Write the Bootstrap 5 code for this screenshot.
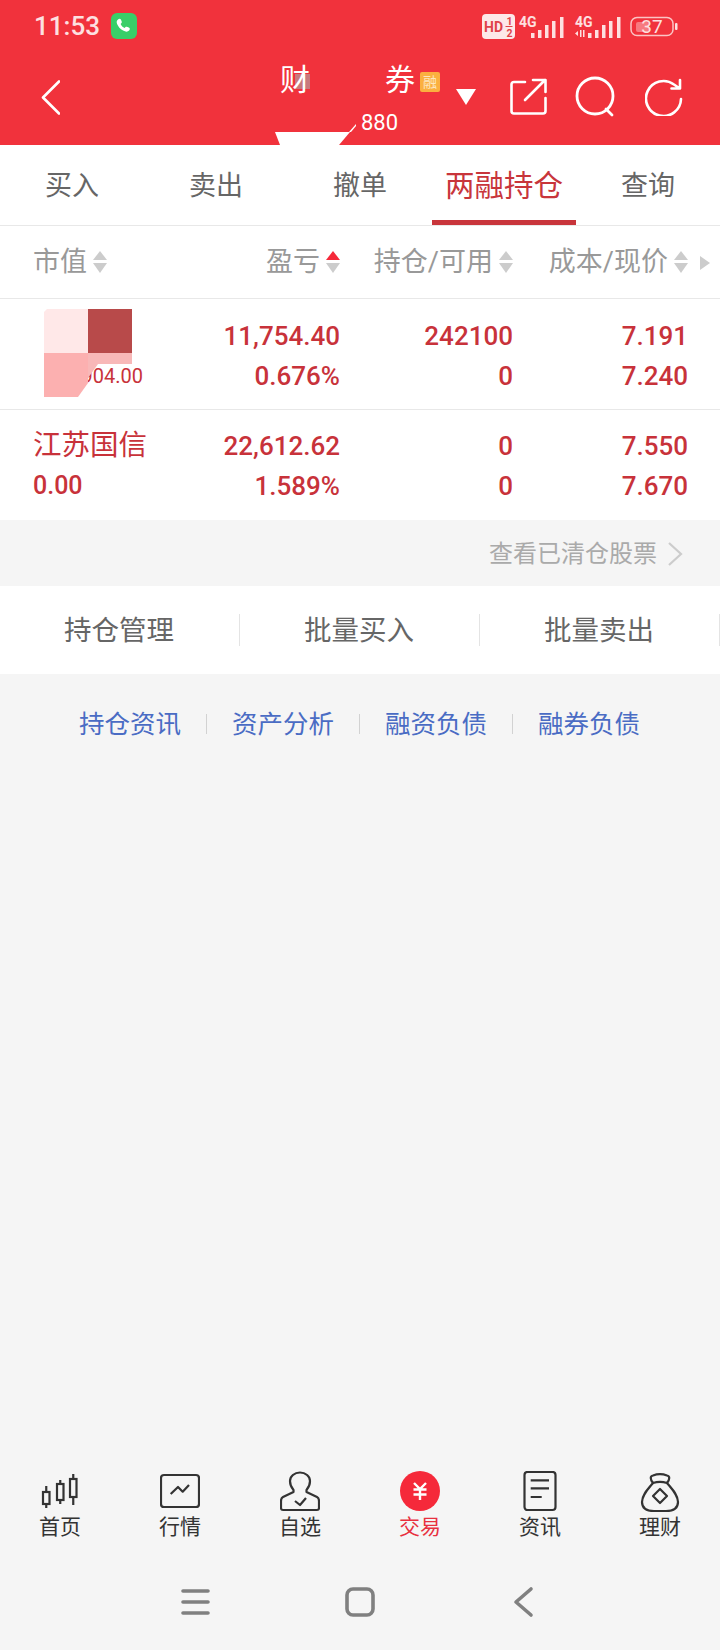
<!DOCTYPE html>
<html lang="zh">
<head>
<meta charset="UTF-8">
<meta name="viewport" content="width=device-width, initial-scale=1.0">
<title>两融持仓</title>
<link rel="stylesheet" href="https://cdn.jsdelivr.net/npm/bootstrap@5.3.0/dist/css/bootstrap.min.css">
<style>
    body {
        width: 720px;
        height: 1650px;
        background: #f5f5f5;
        font-family: Roboto, "Noto Sans CJK SC", sans-serif;
        overflow: hidden;
    }
    .app-top { background: #f1323c; color: #fff; height: 145px; }
    .status-bar { height: 52px; }
    .status-time { margin-left: 34px; font-size: 26px; font-weight: 500; line-height: 1; color: #fde0e0; }
    .phone-chip { width: 26px; height: 26px; margin-left: 11px; }
    .status-icons { margin-right: 40px; }
    .title-row { height: 93px; }
    .back-icon { margin: 28px 0 0 41px; }
    .title-block { width: 176px; margin-left: 220px; }
    .title-line { height: 60px; padding-top: 11px; font-size: 30px; line-height: 34px; }
    .title-gap { margin-left: 75px; }
    .title-cut { position: relative; z-index: 1; }
    .blur-chip { width: 15px; height: 15px; background: #c87a7e; margin: 11px 0 0 -15px; }
    .rong-chip { width: 20px; height: 20px; margin: 9px 0 0 5px; background: #fbb03f; color: #fde6c0; font-size: 14px; line-height: 20px; text-align: center; border-radius: 2px; }
    .title-code { margin: -1px 0 0 81px; font-size: 22px; line-height: 24px; }
    .title-caret { margin: 37px 0 0 0; }
    .share-icon { margin: 26px 0 0 34px; }
    .search-icon { margin: 24px 0 0 28px; }
    .refresh-icon { margin: 26px 0 0 28px; }
    .tab-notch { left: 275px; bottom: 0; }
    .trade-tabs { height: 81px; background: #fff; border-bottom: 1px solid #e8e8e8; }
    .trade-tabs .nav-link { height: 80px; padding: 0; line-height: 82px; font-size: 27px; color: #666; border-bottom: 5px solid transparent; }
    .trade-tabs .nav-link.active { font-size: 29.5px; color: #c8353b; border-bottom-color: #c8353b; }
    .pos-head { height: 73px; padding-top: 1px; background: #fff; border-bottom: 1px solid #e8e8e8; font-size: 27px; color: #999; }
    .cell-name { width: 180px; padding-left: 33px; }
    .cell-pl { width: 160px; }
    .cell-qty { width: 173px; }
    .cell-cost { width: 175px; }
    .sort-mark { margin: 0 -2px 0 6px; }
    .more-mark { margin-left: 12px; }
    .pos-row { height: 111px; padding-top: 17px; background: #fff; border-bottom: 1px solid #e8e8e8; color: #c8323a; font-size: 26px; font-weight: 500; line-height: 40px; }
    .pos-row.last-row { height: 110px; border-bottom: 0; padding-top: 16px; }
    .pos-name { font-size: 28.5px; font-weight: 400; }
    .pos-free { font-size: 25px; }
    .pos-sub { width: 110px; font-size: 20px; font-weight: 400; text-align: right; }
    .mosaic { left: 0; top: -1px; }
    .cleared-link { height: 66px; padding: 2px 37px 0 0; font-size: 24px; color: #aaa; }
    .cleared-link svg { margin-left: 10px; }
    .action-bar { height: 88px; background: #fff; }
    .action-cell { width: 240px; padding: 1px 2px 0 0; font-size: 27.5px; line-height: 88px; color: #666; text-align: center; position: relative; }
    .action-cell::after { content: ""; position: absolute; right: 0; top: 28px; height: 32px; width: 1px; background: #e4e4e4; }
    .info-links { height: 100px; font-size: 25.5px; color: #4a6cc4; padding-left: 79px; }
    .info-links span { width: 102px; white-space: nowrap; }
    .info-links .info-sep { width: 1px; height: 20px; background: #d2d2d2; margin: 0 25px; }
    .dock-item { width: 120px; font-size: 21px; line-height: 26px; color: #333; }
    .dock-item.active { color: #e8303f; }
    .dock-item svg { display: block; margin-bottom: 1px; }
    .dock { height: 76px; margin-bottom: 24px; }
    .sys-nav { height: 64px; margin-bottom: 15px; }
</style>
</head>
<body class="d-flex flex-column">

<div class="app-top position-relative">
    <div class="status-bar d-flex align-items-center">
        <span class="status-time">11:53</span>
        <svg class="phone-chip" viewBox="0 0 26 26">
            <rect width="26" height="26" rx="6" fill="#38cf68"/>
            <path d="M7 6.500c1-1 2.500-1 3 .3l.8 2c.2.6 0 1-.5 1.500l-.7.6c.8 1.800 2.200 3.200 4 4l.7-.7c.5-.5 1-.6 1.500-.4l2 .8c1.200.5 1.300 2 .3 3-1.500 1.500-3.500 1.300-6 0-3-1.500-5-4-6-6.500-.6-1.800-.7-3.300.9-4.600z" fill="#fff"/>
        </svg>
        <svg class="status-icons ms-auto" width="200" height="32" viewBox="480 10 200 32" font-family="Roboto, sans-serif" font-weight="700">
            <rect x="482" y="14" width="33" height="25" rx="4" fill="#fde8e8"/>
            <text x="484" y="32" font-size="14" fill="#e0424a">HD</text>
            <text x="506.500" y="25" font-size="10.500" fill="#e0424a">1</text>
            <path d="M505.500 26.500h7" stroke="#e0424a" stroke-width="1"/>
            <text x="506.500" y="37" font-size="10.500" fill="#e0424a">2</text>
            <g fill="#fde0e0">
                <text x="519" y="27" font-size="14">4G</text>
                <rect x="531" y="33" width="3.500" height="5"/><rect x="538" y="30" width="3.500" height="8"/><rect x="545" y="25" width="3.500" height="13"/><rect x="552" y="21" width="3.500" height="17"/><rect x="560" y="17" width="3.500" height="21"/>
                <text x="575" y="27" font-size="14">4G</text>
                <path d="M575 33.500l3-2.500v5zM580 30h1.500v7H580zM583 30h1.500v7H583z"/>
                <rect x="588" y="33" width="3.500" height="5"/><rect x="595" y="30" width="3.500" height="8"/><rect x="602" y="25" width="3.500" height="13"/><rect x="609" y="21" width="3.500" height="17"/><rect x="617" y="17" width="3.500" height="21"/>
                <rect x="631" y="17.500" width="42" height="18" rx="6" fill="none" stroke="#fbc4c4" stroke-width="1.500"/>
                <rect x="636" y="22" width="13" height="10" rx="2" fill="#f77a80"/>
                <rect x="675" y="23" width="2.500" height="7" rx="1"/>
                <text x="652" y="33" font-size="19" font-weight="400" text-anchor="middle">37</text>
            </g>
        </svg>
    </div>
    <div class="title-row d-flex align-items-start">
        <svg class="back-icon" width="19" height="35" viewBox="0 0 19 35" fill="none" stroke="#fff" stroke-width="2.600" stroke-linecap="round" stroke-linejoin="round"><path d="M18 1.500L2 17.500l16 16"/></svg>
        <div class="title-block">
            <div class="title-line d-flex">
                <span class="title-cut">财</span><span class="blur-chip"></span>
                <span class="title-gap">券</span><span class="rong-chip">融</span>
            </div>
            <div class="title-code">880</div>
        </div>
        <svg class="title-caret" width="20" height="16" viewBox="0 0 20 16"><path d="M0 0h20L10 16z" fill="#fff"/></svg>
        <svg class="share-icon" width="37" height="37" viewBox="0 0 37 37" fill="none" stroke="#fff" stroke-width="2.600" stroke-linecap="round" stroke-linejoin="round"><path d="M15 4H4Q1.500 4 1.500 6.500V33Q1.500 35.500 4 35.500H33Q35.500 35.500 35.500 33V20M15 22L35 2M23 2H35.500V14"/></svg>
        <svg class="search-icon" width="42" height="42" viewBox="0 0 42 42" fill="none" stroke="#fff" stroke-width="2.800" stroke-linecap="round"><circle cx="20" cy="20" r="18"/><path d="M31 33l6 6"/></svg>
        <svg class="refresh-icon" width="38" height="38" viewBox="0 0 38 38" fill="none" stroke="#fff" stroke-width="2.600" stroke-linecap="round" stroke-linejoin="round"><path d="M36 21A17.500 17.500 0 1 1 29 6.500L34 10M35 2V10.500H26.500"/></svg>
    </div>
    <svg class="tab-notch position-absolute" width="82" height="21" viewBox="0 0 82 21" fill="#fff"><path d="M0 8H75L64 21H5z"/><path d="M74 8L81 0V2L76 8z"/></svg>
</div>

<ul class="nav nav-justified trade-tabs">
    <li class="nav-item"><a class="nav-link" href="#">买入</a></li>
    <li class="nav-item"><a class="nav-link" href="#">卖出</a></li>
    <li class="nav-item"><a class="nav-link" href="#">撤单</a></li>
    <li class="nav-item"><a class="nav-link active" href="#">两融持仓</a></li>
    <li class="nav-item"><a class="nav-link" href="#">查询</a></li>
</ul>

<div class="pos-head d-flex align-items-center">
    <div class="cell-name d-flex align-items-center">市值<svg class="sort-mark" width="14" height="23" viewBox="0 0 14 23"><path d="M7 0l7 9H0z" fill="#ccc"/><path d="M0 12h14l-7 10z" fill="#ccc"/></svg></div>
    <div class="cell-pl d-flex align-items-center justify-content-end">盈亏<svg class="sort-mark me-0" width="14" height="23" viewBox="0 0 14 23"><path d="M7 0l7 9H0z" fill="#f5293a"/><path d="M0 12h14l-7 10z" fill="#ccc"/></svg></div>
    <div class="cell-qty d-flex align-items-center justify-content-end">持仓/可用<svg class="sort-mark me-0" width="14" height="23" viewBox="0 0 14 23"><path d="M7 0l7 9H0z" fill="#ccc"/><path d="M0 12h14l-7 10z" fill="#ccc"/></svg></div>
    <div class="cell-cost d-flex align-items-center justify-content-end">成本/现价<svg class="sort-mark me-0" width="14" height="23" viewBox="0 0 14 23"><path d="M7 0l7 9H0z" fill="#ccc"/><path d="M0 12h14l-7 10z" fill="#ccc"/></svg></div>
    <svg class="more-mark" width="10" height="14" viewBox="0 0 10 14"><path d="M0 0l10 7-10 7z" fill="#ccc"/></svg>
</div>

<div class="pos-row d-flex position-relative">
    <div class="cell-name"><div>&nbsp;</div><div class="pos-sub">904.00</div></div>
    <div class="cell-pl text-end"><div>11,754.40</div><div>0.676%</div></div>
    <div class="cell-qty text-end"><div>242100</div><div>0</div></div>
    <div class="cell-cost text-end"><div>7.191</div><div>7.240</div></div>
    <svg class="mosaic position-absolute" width="140" height="100" viewBox="0 0 140 100">
        <path d="M47 11H88V55H44V14z" fill="#ffe8e8"/>
        <rect x="88" y="11" width="44" height="44" fill="#b84a4a"/>
        <path d="M44 55H88V85L78 99H44z" fill="#fcb0b0"/>
        <path d="M88 55H132V66H98L88 80z" fill="#f8b8b8"/>
    </svg>
</div>
<div class="pos-row last-row d-flex">
    <div class="cell-name"><div class="pos-name">江苏国信</div><div class="pos-free">0.00</div></div>
    <div class="cell-pl text-end"><div>22,612.62</div><div>1.589%</div></div>
    <div class="cell-qty text-end"><div>0</div><div>0</div></div>
    <div class="cell-cost text-end"><div>7.550</div><div>7.670</div></div>
</div>

<div class="cleared-link d-flex align-items-center justify-content-end">查看已清仓股票<svg width="16" height="24" viewBox="0 0 16 24" fill="none" stroke="#ccc" stroke-width="2.200"><path d="M2 1l12 11L2 23"/></svg></div>

<div class="action-bar d-flex">
    <div class="action-cell">持仓管理</div>
    <div class="action-cell">批量买入</div>
    <div class="action-cell">批量卖出</div>
</div>

<div class="info-links d-flex align-items-center">
    <span>持仓资讯</span><span class="info-sep"></span>
    <span>资产分析</span><span class="info-sep"></span>
    <span>融资负债</span><span class="info-sep"></span>
    <span>融券负债</span>
</div>

<div class="flex-grow-1"></div>

<div class="dock d-flex">
    <div class="dock-item d-flex flex-column align-items-center">
        <svg width="40" height="42" viewBox="0 0 40 42" fill="none" stroke="#333" stroke-width="2.200"><rect x="3" y="21" width="6.500" height="12"/><path d="M6.250 15v6M6.250 33v4"/><rect x="17" y="13" width="6.500" height="16"/><path d="M20.250 9v4M20.250 29v4"/><rect x="30" y="8" width="6.500" height="18"/><path d="M33.250 3v5M33.250 26v8"/></svg>
        首页
    </div>
    <div class="dock-item d-flex flex-column align-items-center">
        <svg width="40" height="42" viewBox="0 0 40 42" fill="none" stroke="#333" stroke-width="2.200" stroke-linejoin="round"><rect x="1" y="4" width="38" height="32" rx="3"/><path d="M10.700 23L18 16l4.700 4.700L29 14"/></svg>
        行情
    </div>
    <div class="dock-item d-flex flex-column align-items-center">
        <svg width="40" height="42" viewBox="0 0 40 42" fill="none" stroke="#333" stroke-width="2.200" stroke-linejoin="round"><path d="M13.500 19C10 15 10 12 10 10A10 8.500 0 0 1 30 10C30 13 30 15 26.500 19V21L37 26Q39 27 39 30V37Q39 39 37 39H3Q1 39 1 37V30Q1 27 3 26L13.500 21Z"/><path d="M15 30l5 4 6-7"/></svg>
        自选
    </div>
    <div class="dock-item active d-flex flex-column align-items-center">
        <svg width="40" height="42" viewBox="0 0 40 42" fill="none"><circle cx="20" cy="20" r="20" fill="#f5293a"/><path d="M14 12l6 6 6-6M13.500 18.500h13M13.500 23.500h13M20 18v11" stroke="#fff" stroke-width="2.400"/></svg>
        交易
    </div>
    <div class="dock-item d-flex flex-column align-items-center">
        <svg width="40" height="42" viewBox="0 0 40 42" fill="none" stroke="#333" stroke-width="2.200"><rect x="4.500" y="1" width="31" height="38" rx="3"/><path d="M10.700 9.300H29M10.700 17.300H29M10.700 26H21.700"/></svg>
        资讯
    </div>
    <div class="dock-item d-flex flex-column align-items-center">
        <svg width="40" height="42" viewBox="0 0 40 42" fill="none" stroke="#333" stroke-width="2.200" stroke-linejoin="round"><path d="M13 12C8 18 2 24 2 31C2 38 8 40 14 40H26C32 40 38 38 38 31C38 24 32 18 27 12"/><path d="M13 12C10 8 10 5 13 4.500C17 3 23 3 27 4.500C30 5 30 8 27 12C22 10.500 18 10.500 13 12Z"/><path d="M20 18l7 7-7 7-7-7z"/></svg>
        理财
    </div>
</div>

<div class="sys-nav d-flex align-items-center">
    <svg class="flex-shrink-0" width="720" height="64" viewBox="0 0 720 64" fill="none" stroke="#808080" stroke-width="3.600" stroke-linecap="round" stroke-linejoin="round">
        <path d="M183 20h25M183 31h25M183 42h25"/>
        <rect x="347" y="18" width="26" height="26" rx="6"/>
        <path d="M531 18L516 31l15 13"/>
    </svg>
</div>

<script src="https://cdn.jsdelivr.net/npm/bootstrap@5.3.0/dist/js/bootstrap.bundle.min.js"></script>
</body>
</html>
